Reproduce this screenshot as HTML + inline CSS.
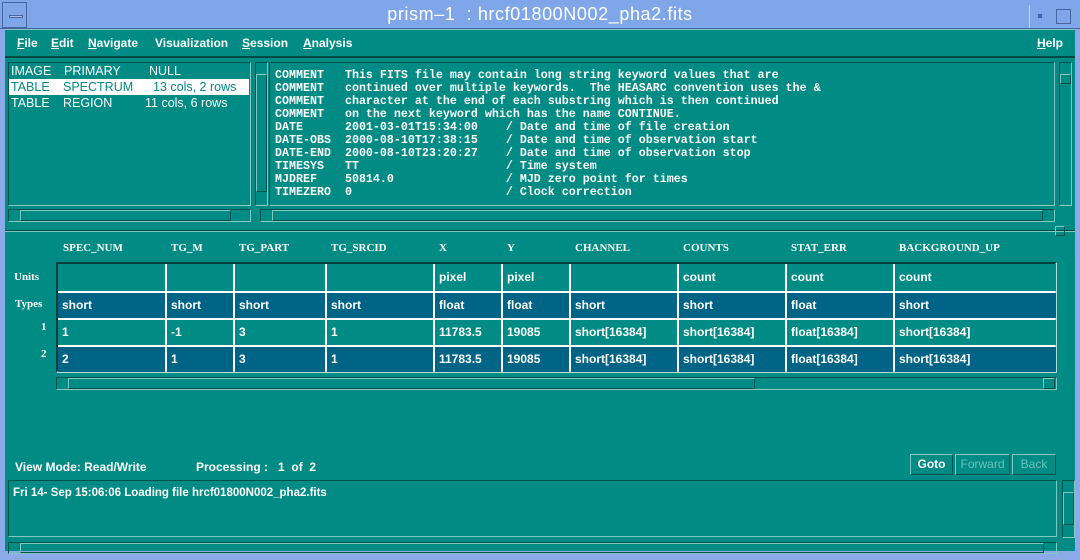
<!DOCTYPE html>
<html><head><style>
*{margin:0;padding:0;box-sizing:border-box}
body{width:1080px;height:560px;background:#8aaae8;position:relative;overflow:hidden;font-family:"Liberation Sans",sans-serif;color:#fff;font-weight:bold;font-size:12px}
.a{position:absolute}
.teal{background:#008b84}
.sunk{border:1px solid;border-color:#00504c #7fc8c2 #7fc8c2 #00504c}
.rais{border:1px solid;border-color:#7fc8c2 #00504c #00504c #7fc8c2}
.mono{font-family:"Liberation Mono",monospace;font-size:11.67px;line-height:13px;white-space:pre}
.grid{position:absolute;left:56px;top:262px;width:1001px;height:111px;border:2px solid;border-color:#003f3c #b0dcd8 #b0dcd8 #003f3c;background:#fff}
.cell{position:absolute;padding-left:4px;line-height:24px;font-size:12px}
.t{background:#008b84}.d{background:#006487}
.hd{position:absolute;top:242px;font-size:11px;font-family:"Liberation Serif",serif}
.mn{position:absolute;top:36px;font-size:12px}
.li{position:absolute;font-size:12.5px;font-weight:normal;line-height:16px}
</style></head><body>
<div class="a" style="left:0;top:0;width:1080px;height:29px;background:#7fa6e8;border-bottom:1px solid #4a66a0"></div>
<div class="a" style="left:2px;top:2px;width:25px;height:26px;border:1px solid #4a66a0"></div>
<div class="a" style="left:9px;top:15px;width:14px;height:3px;border:1px solid #4a66a0;background:#a8c0f0"></div>
<div class="a" style="left:0;top:4px;width:1080px;text-align:center;font-size:18px;font-weight:normal;letter-spacing:0.6px">prism–1&nbsp; : hrcf01800N002_pha2.fits</div>
<div class="a" style="left:1029px;top:5px;width:23px;height:23px;border-left:1px solid #c0d4f8"></div>
<div class="a" style="left:1038px;top:14px;width:4px;height:4px;background:#4a66a0"></div>
<div class="a" style="left:1056px;top:9px;width:15px;height:15px;border:1px solid #4a66a0"></div>
<div class="a teal" style="left:5px;top:29px;width:1070px;height:522px"></div>
<div class="a" style="left:5px;top:29px;width:1070px;height:29px;border-top:1px solid #7fc8c2;border-bottom:2px solid #004a46"></div>
<div class="mn" style="left:17px"><u>F</u>ile</div>
<div class="mn" style="left:51px"><u>E</u>dit</div>
<div class="mn" style="left:88px"><u>N</u>avigate</div>
<div class="mn" style="left:155px">Visualization</div>
<div class="mn" style="left:242px"><u>S</u>ession</div>
<div class="mn" style="left:303px"><u>A</u>nalysis</div>
<div class="mn" style="left:1037px"><u>H</u>elp</div>
<div class="a sunk" style="left:8px;top:62px;width:243px;height:144px"></div>
<div class="a" style="left:9px;top:79px;width:240px;height:16px;background:#fff;border:1px solid #fff"></div>
<div class="li" style="left:11px;top:63px">IMAGE</div><div class="li" style="left:64px;top:63px">PRIMARY</div><div class="li" style="left:149px;top:63px">NULL</div>
<div class="li" style="left:11px;top:79px;color:#008b84">TABLE</div><div class="li" style="left:63px;top:79px;color:#008b84">SPECTRUM</div><div class="li" style="left:153px;top:79px;color:#008b84">13 cols, 2 rows</div>
<div class="li" style="left:11px;top:95px">TABLE</div><div class="li" style="left:63px;top:95px">REGION</div><div class="li" style="left:145px;top:95px">11 cols, 6 rows</div>
<div class="a sunk" style="left:255px;top:62px;width:13px;height:144px"></div>
<div class="a rais" style="left:256px;top:74px;width:11px;height:118px"></div>
<div class="a sunk" style="left:8px;top:209px;width:243px;height:13px"></div>
<div class="a rais" style="left:20px;top:210px;width:211px;height:11px"></div>
<div class="a sunk" style="left:269px;top:62px;width:786px;height:144px"></div>
<div class="a mono" style="left:275px;top:69px">COMMENT   This FITS file may contain long string keyword values that are
COMMENT   continued over multiple keywords.  The HEASARC convention uses the &amp;
COMMENT   character at the end of each substring which is then continued
COMMENT   on the next keyword which has the name CONTINUE.
DATE      2001-03-01T15:34:00    / Date and time of file creation
DATE-OBS  2000-08-10T17:38:15    / Date and time of observation start
DATE-END  2000-08-10T23:20:27    / Date and time of observation stop
TIMESYS   TT                     / Time system
MJDREF    50814.0                / MJD zero point for times
TIMEZERO  0                      / Clock correction</div>
<div class="a sunk" style="left:1059px;top:62px;width:13px;height:144px"></div>
<div class="a rais" style="left:1060px;top:74px;width:11px;height:10px"></div>
<div class="a sunk" style="left:260px;top:209px;width:795px;height:13px"></div>
<div class="a rais" style="left:272px;top:210px;width:771px;height:11px"></div>
<div class="a" style="left:5px;top:230px;width:1070px;border-top:1px solid #004a46;border-bottom:1px solid #7fc8c2"></div>
<div class="a rais" style="left:1055px;top:226px;width:10px;height:10px"></div>
<div class="hd" style="left:63px">SPEC_NUM</div>
<div class="hd" style="left:171px">TG_M</div>
<div class="hd" style="left:239px">TG_PART</div>
<div class="hd" style="left:331px">TG_SRCID</div>
<div class="hd" style="left:439px">X</div>
<div class="hd" style="left:507px">Y</div>
<div class="hd" style="left:575px">CHANNEL</div>
<div class="hd" style="left:683px">COUNTS</div>
<div class="hd" style="left:791px">STAT_ERR</div>
<div class="hd" style="left:899px">BACKGROUND_UP</div>
<div class="hd" style="left:14px;top:271px">Units</div>
<div class="hd" style="left:15px;top:298px">Types</div>
<div class="hd" style="left:41px;top:321px">1</div>
<div class="hd" style="left:41px;top:348px">2</div>
<div class="grid" id="g"></div>
<script>
var b=[0,107,175,267,375,443,511,619,727,835,998];
var rows=[["t",["","","","","pixel","pixel","","count","count","count"]],
["d",["short","short","short","short","float","float","short","short","float","short"]],
["t",["1","-1","3","1","11783.5","19085","short[16384]","short[16384]","float[16384]","short[16384]"]],
["d",["2","1","3","1","11783.5","19085","short[16384]","short[16384]","float[16384]","short[16384]"]]];
var g=document.getElementById('g'),h='';
for(var r=0;r<4;r++)for(var c=0;c<10;c++){var x=b[c]+(c?2:0),w=b[c+1]-x;
h+='<div class="cell '+rows[r][0]+'" style="left:'+x+'px;top:'+(r*27+(r?2:0))+'px;width:'+w+'px;height:'+(r?25:27)+'px;'+(r==0?'line-height:27px':'')+'">'+rows[r][1][c]+'</div>';}
g.innerHTML=h;
</script>
<div class="a sunk" style="left:56px;top:377px;width:1001px;height:13px"></div>
<div class="a rais" style="left:68px;top:378px;width:687px;height:11px"></div>
<div class="a rais" style="left:1043px;top:378px;width:12px;height:11px"></div>
<div class="a" style="left:15px;top:460px;font-size:12px">View Mode: Read/Write</div>
<div class="a" style="left:196px;top:460px;font-size:12px">Processing :&nbsp;&nbsp; 1&nbsp; of&nbsp; 2</div>
<div class="a rais" style="left:910px;top:454px;width:43px;height:21px;text-align:center;line-height:19px">Goto</div>
<div class="a rais" style="left:955px;top:454px;width:55px;height:21px;text-align:center;line-height:19px;color:#6fc0ba;font-weight:normal">Forward</div>
<div class="a rais" style="left:1012px;top:454px;width:44px;height:21px;text-align:center;line-height:19px;color:#6fc0ba;font-weight:normal">Back</div>
<div class="a sunk" style="left:8px;top:480px;width:1049px;height:57px"></div>
<div class="a" style="left:13px;top:487px;font-size:11.5px">Fri 14- Sep 15:06:06 Loading file hrcf01800N002_pha2.fits</div>
<div class="a sunk" style="left:1062px;top:480px;width:13px;height:58px"></div>
<div class="a rais" style="left:1063px;top:492px;width:11px;height:33px"></div>
<div class="a sunk" style="left:8px;top:542px;width:1049px;height:12px"></div>
<div class="a rais" style="left:20px;top:543px;width:1024px;height:10px"></div>
</body></html>
